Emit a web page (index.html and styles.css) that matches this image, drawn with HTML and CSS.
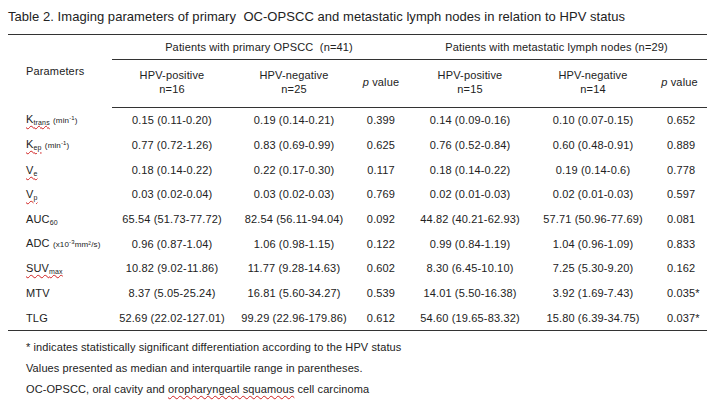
FILE: index.html
```html
<!DOCTYPE html>
<html>
<head>
<meta charset="utf-8">
<link rel="stylesheet" href="styles.css">
</head>
<body>
<div class="title">Table 2. Imaging parameters of primary&nbsp; OC-OPSCC and metastatic lymph nodes in relation to HPV status</div>
<table class="tbl">
  <colgroup>
    <col class="c-par"><col class="c-pos1"><col class="c-neg1"><col class="c-p1"><col class="c-pos2"><col class="c-neg2"><col class="c-p2">
  </colgroup>
  <thead>
    <tr class="grp">
      <th class="par" rowspan="2">Parameters</th>
      <th class="gh" colspan="3">Patients with primary OPSCC&nbsp; (n=41)</th>
      <th class="gh" colspan="3">Patients with metastatic lymph nodes (n=29)</th>
    </tr>
    <tr class="sub">
      <th>HPV-positive<br>n=16</th>
      <th>HPV-negative<br>n=25</th>
      <th><i>p</i> value</th>
      <th>HPV-positive<br>n=15</th>
      <th>HPV-negative<br>n=14</th>
      <th><i>p</i> value</th>
    </tr>
  </thead>
  <tbody>
    <tr><td class="par"><span class="sp">K<sub>trans</sub></span> <span class="unit">(min<sup>-1</sup>)</span></td><td>0.15 (0.11-0.20)</td><td>0.19 (0.14-0.21)</td><td>0.399</td><td>0.14 (0.09-0.16)</td><td>0.10 (0.07-0.15)</td><td class="pl">0.652</td></tr>
    <tr><td class="par"><span class="sp">K<sub>ep</sub></span> <span class="unit">(min<sup>-1</sup>)</span></td><td>0.77 (0.72-1.26)</td><td>0.83 (0.69-0.99)</td><td>0.625</td><td>0.76 (0.52-0.84)</td><td>0.60 (0.48-0.91)</td><td class="pl">0.889</td></tr>
    <tr><td class="par"><span class="sp">V<sub>e</sub></span></td><td>0.18 (0.14-0.22)</td><td>0.22 (0.17-0.30)</td><td>0.117</td><td>0.18 (0.14-0.22)</td><td>0.19 (0.14-0.6)</td><td class="pl">0.778</td></tr>
    <tr><td class="par"><span class="sp">V<sub>p</sub></span></td><td>0.03 (0.02-0.04)</td><td>0.03 (0.02-0.03)</td><td>0.769</td><td>0.02 (0.01-0.03)</td><td>0.02 (0.01-0.03)</td><td class="pl">0.597</td></tr>
    <tr><td class="par">AUC<sub>60</sub></td><td>65.54 (51.73-77.72)</td><td>82.54 (56.11-94.04)</td><td>0.092</td><td>44.82 (40.21-62.93)</td><td>57.71 (50.96-77.69)</td><td class="pl">0.081</td></tr>
    <tr><td class="par">ADC <span class="unit">(x10<sup>-3</sup>mm²/s)</span></td><td>0.96 (0.87-1.04)</td><td>1.06 (0.98-1.15)</td><td>0.122</td><td>0.99 (0.84-1.19)</td><td>1.04 (0.96-1.09)</td><td class="pl">0.833</td></tr>
    <tr><td class="par"><span class="sp">SUV<sub>max</sub></span></td><td>10.82 (9.02-11.86)</td><td>11.77 (9.28-14.63)</td><td>0.602</td><td>8.30 (6.45-10.10)</td><td>7.25 (5.30-9.20)</td><td class="pl">0.162</td></tr>
    <tr><td class="par">MTV</td><td>8.37 (5.05-25.24)</td><td>16.81 (5.60-34.27)</td><td>0.539</td><td>14.01 (5.50-16.38)</td><td>3.92 (1.69-7.43)</td><td class="pl">0.035*</td></tr>
    <tr><td class="par">TLG</td><td>52.69 (22.02-127.01)</td><td>99.29 (22.96-179.86)</td><td>0.612</td><td>54.60 (19.65-83.32)</td><td>15.80 (6.39-34.75)</td><td class="pl">0.037*</td></tr>
  </tbody>
</table>
<div class="notes">
  <p>* indicates statistically significant differentiation according to the HPV status</p>
  <p>Values presented as median and interquartile range in parentheses.</p>
  <p>OC-OPSCC, oral cavity and <span class="sp">oropharyngeal squamous</span> cell carcinoma</p>
</div>
</body>
</html>
```

FILE: styles.css
```css
html, body {
  margin: 0;
  padding: 0;
  background: #ffffff;
}
body {
  padding: 8px;
  font-family: "Liberation Sans", Arial, sans-serif;
  color: #222222;
}
.title {
  font-size: 13px;
  line-height: 18px;
  height: 18px;
  letter-spacing: 0.05px;
}
.tbl {
  width: 699px;
  border-collapse: collapse;
  table-layout: fixed;
  font-size: 11px;
  letter-spacing: 0.15px;
  border-top: 1px solid #333;
  border-bottom: 1px solid #333;
  margin-top: 8px;
}
.c-par { width: 104px; }
.c-pos1 { width: 120px; }
.c-neg1 { width: 124px; }
.c-p1 { width: 50px; }
.c-pos2 { width: 128px; }
.c-neg2 { width: 118px; }
.c-p2 { width: 55px; }

.tbl th {
  font-weight: normal;
  padding: 0;
  text-align: center;
  line-height: 14px;
}
.tbl th.par {
  text-align: left;
  padding-left: 18px;
  vertical-align: middle;
}
.grp th.gh {
  height: 24px;
  border-bottom: 1px solid #333;
  vertical-align: middle;
}
.sub th {
  height: 43px;
  padding-bottom: 4px;
  vertical-align: middle;
  border-bottom: 1px solid #333;
}
.tbl td {
  height: 24.7px;
  padding: 0;
  text-align: center;
  vertical-align: middle;
  line-height: 14px;
  white-space: nowrap;
}
.tbl td.par {
  text-align: left;
  padding-left: 18px;
}
.tbl td.pl {
  text-align: left;
  padding-left: 15px;
}
sub {
  font-size: 7px;
  vertical-align: -2px;
  line-height: 0;
}
sup {
  font-size: 6px;
  vertical-align: 3px;
  line-height: 0;
}
.unit {
  font-size: 8px;
}
.sp {
  text-decoration: underline wavy #d02020;
  text-decoration-thickness: 1px;
  text-underline-offset: 2px;
}
.notes {
  padding-left: 18px;
  padding-top: 6px;
  font-size: 11px;
  letter-spacing: 0.1px;
}
.notes p {
  margin: 0;
  line-height: 21px;
}
```
